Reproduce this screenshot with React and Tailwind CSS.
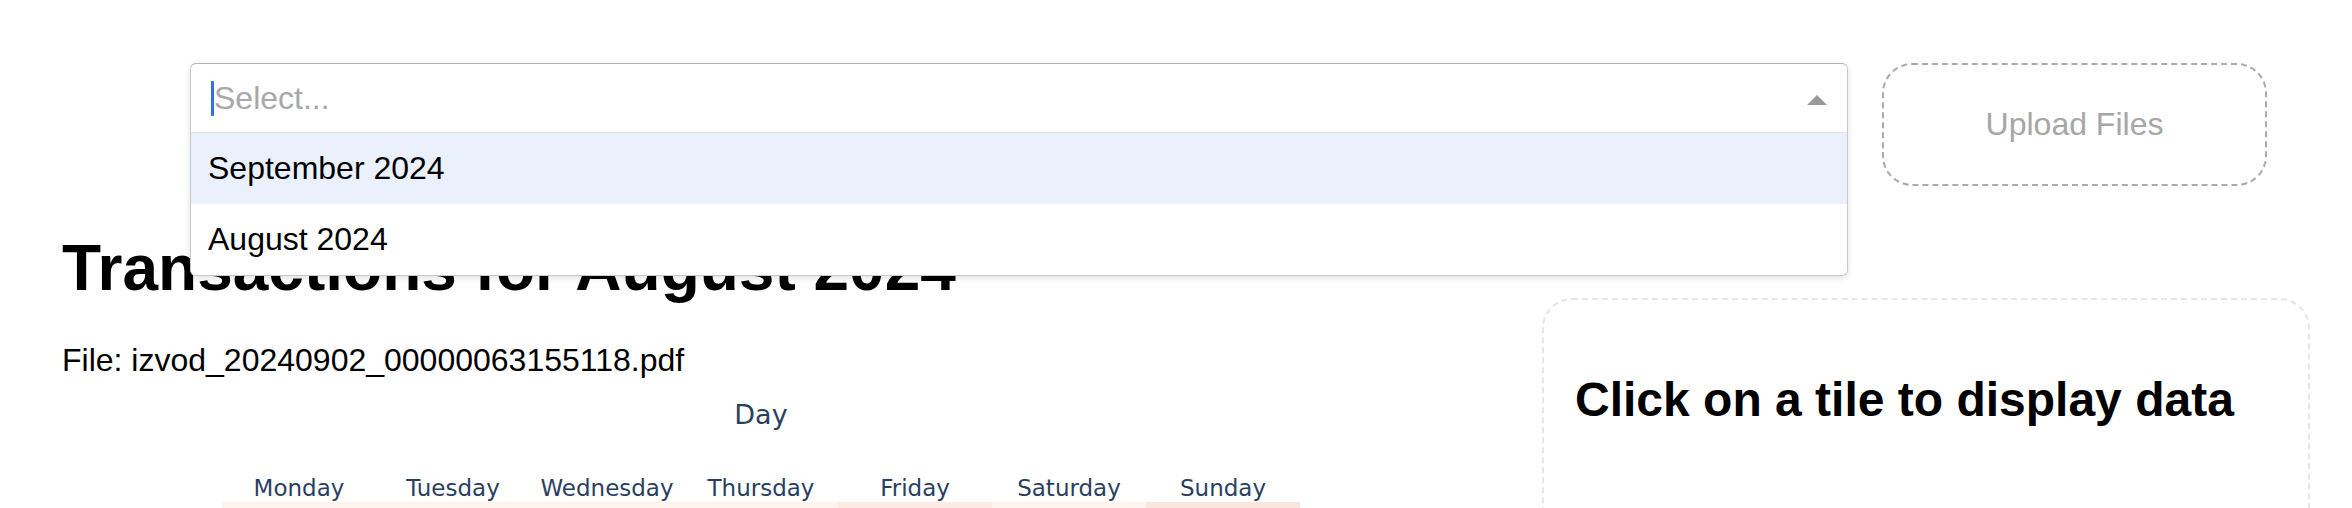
import React from 'react';

const days = [
  { name: 'Monday', color: 'bg-[#fdf4ef]' },
  { name: 'Tuesday', color: 'bg-[#fdf4ef]' },
  { name: 'Wednesday', color: 'bg-[#fdf4ef]' },
  { name: 'Thursday', color: 'bg-[#fdf4ef]' },
  { name: 'Friday', color: 'bg-[#fbebe3]' },
  { name: 'Saturday', color: 'bg-[#fdf4ef]' },
  { name: 'Sunday', color: 'bg-[#fae6dc]' },
];

const options = ['September 2024', 'August 2024'];

function MonthSelect() {
  return (
    <div className="relative w-[1658px] h-[69px] shrink-0">
      <div className="absolute top-0 left-0 w-full z-10 bg-white border border-[#c8c8c8] border-t-[#b3b3b3] rounded-[6px] shadow-[0_2px_6px_rgba(0,0,0,0.12)] overflow-hidden">
        {/* Control */}
        <div className="h-[69px] flex items-center justify-between border-b border-[#e3e3e3] pl-[20px] pr-[20px]">
          <div className="flex items-center">
            <span className="w-[3px] h-[35px] bg-[#2f6fed] rounded-[1px]"></span>
            <span className="text-[32px] leading-[37px] text-[#a8a8a8]">Select...</span>
          </div>
          <svg width="20" height="10" viewBox="0 0 20 10" className="mt-[4px]">
            <polygon points="10,0 20,10 0,10" fill="#999999" />
          </svg>
        </div>
        {/* Menu */}
        {options.map((opt, i) => (
          <div
            key={opt}
            className={`h-[71px] flex items-center pl-[17px] text-[32px] leading-[37px] text-black ${i === 0 ? 'bg-[#eaf1fd]' : 'bg-white'}`}
          >
            {opt}
          </div>
        ))}
      </div>
    </div>
  );
}

export default function App() {
  return (
    <div className="w-full min-h-[508px] bg-white text-black font-['Liberation_Sans',Arial,sans-serif] overflow-hidden">
      {/* Top row: select + upload */}
      <div className="flex items-start gap-[34px] pt-[63px] pl-[190px]">
        <MonthSelect />
        <div className="w-[385px] h-[123px] shrink-0 border-2 border-dashed border-[#ababab] rounded-[30px] flex items-center justify-center">
          <span className="text-[32px] leading-[37px] text-[#a6a6a6]">Upload Files</span>
        </div>
      </div>

      <div className="flex items-start">
        {/* Left column */}
        <div className="flex flex-col pl-[62px]">
          <h1 className="mt-[45px] text-[64px] leading-[74px] font-bold whitespace-nowrap">
            Transactions for August 2024
          </h1>
          <p className="mt-[37px] text-[32px] leading-[37px] whitespace-nowrap">
            File: izvod_20240902_00000063155118.pdf
          </p>

          {/* Heatmap */}
          <div className="ml-[160px] w-[1078px] font-['DejaVu_Sans',Verdana,sans-serif] text-[#2a3f5f]">
            <div className="mt-[20px] text-center text-[27px] leading-[32px]">Day</div>
            <div className="mt-[44px] grid grid-cols-7">
              {days.map((d) => (
                <div key={d.name} className="h-[27px] text-center text-[23px] leading-[27px]">
                  {d.name}
                </div>
              ))}
            </div>
            <div className="grid grid-cols-7">
              {days.map((d) => (
                <div key={d.name} className={`h-[100px] ${d.color}`}></div>
              ))}
            </div>
          </div>
        </div>

        {/* Right panel */}
        <div className="ml-auto mr-[42px] mt-[112px] w-[768px] h-[320px] shrink-0 border-2 border-dashed border-[#e6e6e6] rounded-[30px] pt-[72px] pl-[31px]">
          <h2 className="text-[48px] leading-[55px] font-bold whitespace-nowrap">
            Click on a tile to display data
          </h2>
        </div>
      </div>
    </div>
  );
}
